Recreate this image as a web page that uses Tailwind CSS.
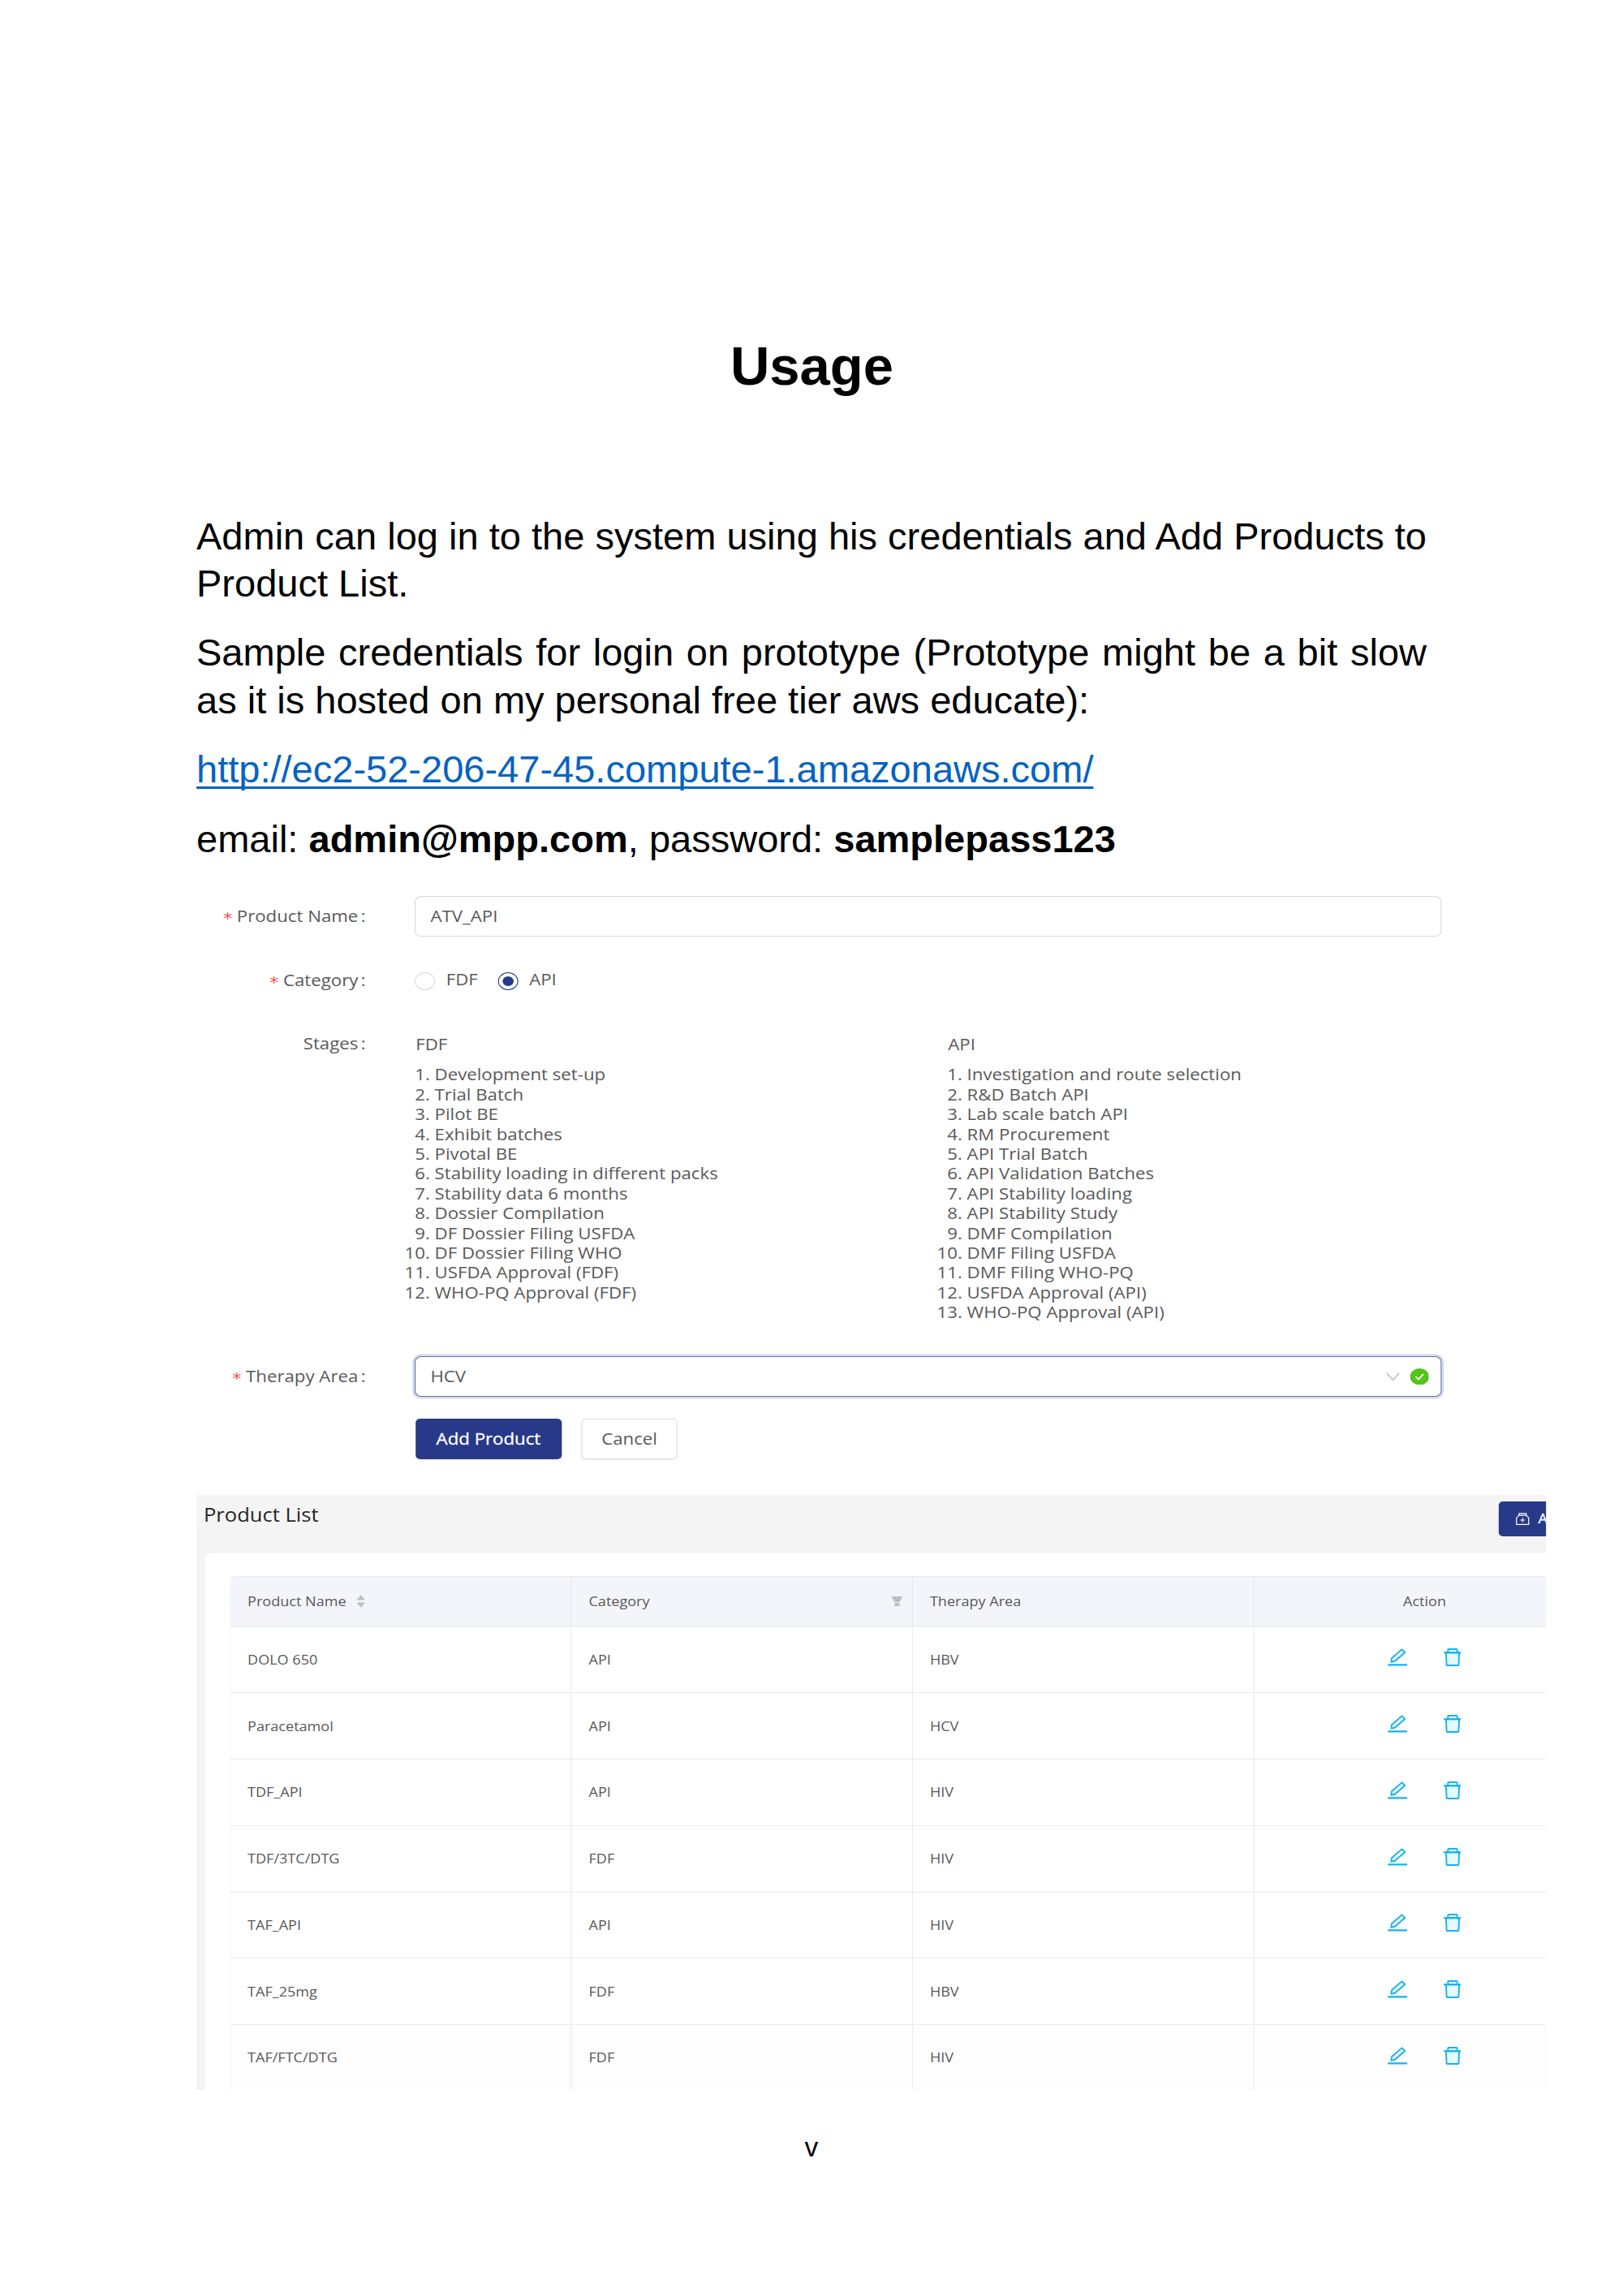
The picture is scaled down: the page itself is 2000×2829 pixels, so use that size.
<!DOCTYPE html>
<html lang="en">
<head>
<meta charset="utf-8">
<title>Usage</title>
<script src="https://cdn.jsdelivr.net/npm/@tailwindcss/browser@4"></script>
</head>
<body class="bg-white">
<main class="w-[2000px] h-[2829px] overflow-hidden bg-white pl-[242px] pt-[413px] font-['Liberation_Sans',Arial,sans-serif] text-black">
  <h1 class="w-[1517px] h-[218.500px] text-center text-[67px] leading-[76px] font-bold">Usage</h1>
  <div class="w-[1516px] h-[472.500px] flex flex-col gap-[26.4px] text-[47.02px] leading-[58.8px]">
    <p class="text-justify">Admin can log in to the system using his credentials and Add Products to Product List.</p>
    <p class="text-justify">Sample credentials for login on prototype (Prototype might be a bit slow as it is hosted on my personal free tier aws educate):</p>
    <p><a class="text-[#0563c1] underline decoration-[3px] underline-offset-[5px] [text-decoration-skip-ink:none]">http://ec2-52-206-47-45.compute-1.amazonaws.com/</a></p>
    <p>email: <b>admin@mpp.com</b>, password: <b>samplepass123</b></p>
  </div>

  <!-- Product form -->
  <form class="w-[1459px] h-[738px] origin-top-left scale-x-[1.14] font-['Open_Sans',sans-serif] text-[19.5px] leading-[24.4px] text-[#595959]">
    <div class="flex items-center h-[49.5px]">
      <label class="w-[183px] pt-[1px] text-right whitespace-nowrap"><span class="inline-block translate-y-[2px] font-['DejaVu_Sans',sans-serif] leading-none text-[#ff4d4f] mr-[5px]">*</span>Product Name<span class="ml-[3px]">:</span></label>
      <div class="ml-[53px] w-[1110px] h-full border-[1.5px] border-[#d9d9d9] rounded-[7px] px-[16px] pt-[1px] flex items-center">ATV_API</div>
    </div>
    <div class="flex items-center mt-[43px] h-[24px]">
      <label class="w-[183px] text-right whitespace-nowrap"><span class="inline-block translate-y-[2px] font-['DejaVu_Sans',sans-serif] leading-none text-[#ff4d4f] mr-[5px]">*</span>Category<span class="ml-[3px]">:</span></label>
      <span class="ml-[53px] w-[22.4px] h-[22.4px] mt-[1px] rounded-full border-[1.5px] border-[#d9d9d9]"></span>
      <span class="ml-[11.5px] w-[56px] -mt-[3px]">FDF</span>
      <span class="w-[22.4px] h-[22.4px] mt-[1px] rounded-full border-[1.5px] border-[#28398a] flex items-center justify-center"><span class="size-[11.5px] rounded-full bg-[#28398a]"></span></span>
      <span class="ml-[11.500px] -mt-[3px]">API</span>
    </div>
    <div class="flex mt-[53.5px] h-[397px]">
      <div class="w-[183px] text-right">Stages<span class="ml-[3px]">:</span></div>
      <div class="ml-[53px] w-[575.500px]">
        <div class="pl-[1px] mt-[0.5px]">FDF</div>
        <ol class="mt-[13.5px] list-decimal pl-[21.500px]">
          <li>Development set-up</li><li>Trial Batch</li><li>Pilot BE</li><li>Exhibit batches</li><li>Pivotal BE</li><li>Stability loading in different packs</li><li>Stability data 6 months</li><li>Dossier Compilation</li><li>DF Dossier Filing USFDA</li><li>DF Dossier Filing WHO</li><li>USFDA Approval (FDF)</li><li>WHO-PQ Approval (FDF)</li>
        </ol>
      </div>
      <div>
        <div class="pl-[1px] mt-[0.5px]">API</div>
        <ol class="mt-[13.5px] list-decimal pl-[21.500px]">
          <li>Investigation and route selection</li><li>R&amp;D Batch API</li><li>Lab scale batch API</li><li>RM Procurement</li><li>API Trial Batch</li><li>API Validation Batches</li><li>API Stability loading</li><li>API Stability Study</li><li>DMF Compilation</li><li>DMF Filing USFDA</li><li>DMF Filing WHO-PQ</li><li>USFDA Approval (API)</li><li>WHO-PQ Approval (API)</li>
        </ol>
      </div>
    </div>
    <div class="flex items-center h-[50px]">
      <label class="w-[183px] text-right whitespace-nowrap"><span class="inline-block translate-y-[2px] font-['DejaVu_Sans',sans-serif] leading-none text-[#ff4d4f] mr-[5px]">*</span>Therapy Area<span class="ml-[3px]">:</span></label>
      <div class="ml-[53px] w-[1110px] h-full border-[1.5px] border-[#6473b0] ring-[2.5px] ring-[#d8daea] rounded-[7px] pl-[16px] pr-[13px] flex items-center">HCV
        <svg class="ml-auto" width="15" height="11" viewBox="0 0 15 11" fill="none" stroke="#c4c4c4" stroke-width="1.6"><path d="M.8 .8L7.500 9.500L14.200 .8"/></svg>
        <svg class="ml-[10.500px]" width="20.500" height="20.500" viewBox="0 0 20 20"><circle cx="10" cy="10" r="10" fill="#52c41a"/><path d="M5.800 10L8.900 13.100L14 6.800" fill="none" stroke="#fff" stroke-width="1.700"/></svg>
      </div>
    </div>
    <div class="flex mt-[27px] ml-[237px] gap-[21.5px] h-[50px]">
      <button type="button" class="w-[157.500px] bg-[#28398a] text-white rounded-[5px] shadow-[0_2px_1px_#0000000b] [-webkit-text-stroke:0.3px_#fff]">Add Product</button>
      <button type="button" class="w-[104px] bg-white border-[1.5px] border-[#dedede] rounded-[5px] shadow-[0_2px_1px_#0000000b]">Cancel</button>
    </div>
  </form>

  <!-- Product list -->
  <section class="w-[1569px] h-[732.500px] overflow-hidden origin-top-left scale-x-[1.06] bg-[#f4f4f4] font-['Open_Sans',sans-serif] text-[17.050px] leading-[24px] text-[#595959]">
    <div class="flex justify-between h-[70px]">
      <h2 class="pl-[8.500px] pt-[7px] text-[24.100px] leading-[33px] text-[#262626]">Product List</h2>
      <button type="button" class="mt-[8px] -mr-[120px] w-[175.500px] h-[42.500px] rounded-[5px] bg-[#28398a] text-white flex items-center pl-[20.500px] gap-[10.500px] shrink-0 whitespace-nowrap [-webkit-text-stroke:0.3px_#fff]">
        <svg width="15.500" height="15" viewBox="0 0 16 15" preserveAspectRatio="none" fill="none" stroke="#fff" stroke-width="1.200"><path d="M3.600 3.600V.8H12.400V3.600M3.600 3.200H12.400L15.300 6.200V14.300H.7V6.200L3.600 3.200M8 6.400V11.600M5.300 9H10.700"/></svg>
        <span>Add Product</span>
      </button>
    </div>
    <div class="ml-[9.400px] w-[1700px] h-[720px] bg-white border-t-[1.5px] border-l-[1.5px] border-[#ebebeb] rounded-tl-[8px] pl-[28.300px] pt-[28.500px]">
      <div class="w-[1587.500px] border-t-[1.5px] border-l-[1.5px] border-[#e9e9e9] rounded-tl-[6px] overflow-hidden">
        <div class="grid grid-cols-4 h-[62px] bg-[#f3f5fa] border-b-[2px] border-[#efefef]">
          <div class="flex items-center px-[19.800px] pt-[1px] border-r border-[#e6e7eb]">Product Name
            <svg class="ml-[11.500px]" width="10.500" height="16" viewBox="0 0 11 16" fill="#bfbfbf"><path d="M5.500 0L11 6.500H0zM5.500 16L11 9.500H0z"/></svg>
          </div>
          <div class="flex items-center pl-[19.800px] pr-[10.500px] pt-[1px] border-r border-[#e6e7eb]">Category
            <svg class="ml-auto" width="13" height="12" viewBox="0 0 14 12" preserveAspectRatio="none" fill="#bfbfbf"><path d="M0 0H14L10.200 7H3.800zM3.800 8H10.200V12H3.800z"/></svg>
          </div>
          <div class="flex items-center px-[19.800px] pt-[1px] border-r border-[#e6e7eb]">Therapy Area</div>
          <div class="flex items-center justify-center pt-[1px]">Action</div>
        </div>
        <div id="rows"></div>
      </div>
    </div>
  </section>
  <footer class="w-[1516px] mt-[52px] text-center text-[33.600px] leading-[38px]">v</footer>
</main>

<template id="row">
  <div class="grid grid-cols-4 h-[81.750px] border-b-[1.5px] border-[#ebebeb]">
    <div class="flex items-center px-[19.800px] border-r border-[#e9e9e9]"></div>
    <div class="flex items-center px-[19.800px] border-r border-[#e9e9e9]"></div>
    <div class="flex items-center px-[19.800px] border-r border-[#e9e9e9]"></div>
    <div class="flex items-center justify-center gap-[41.500px] pb-[5px]">
      <svg width="22.600" height="22" viewBox="0 0 24 22" preserveAspectRatio="none" fill="none" stroke="#13b2f0" stroke-width="1.900"><path d="M.8 20.400H23.200" stroke-width="2.100" stroke-linecap="round"/><path d="M17.400 1.400L21.200 5L8.800 15.800L4.300 16.700L4.900 12.300z" fill="#f2fcff" stroke-linejoin="round"/></svg>
      <svg width="20.800" height="22" viewBox="0 0 22 22" preserveAspectRatio="none" fill="none" stroke="#13b2f0" stroke-width="1.900"><path d="M2.900 5.200L3.600 20.200Q3.600 21 4.400 21H17.600Q18.400 21 18.400 20.200L19.100 5.200z" fill="#e6faff"/><path d="M.6 5.200H21.400" stroke-linecap="round"/><path d="M5.300 5V2Q5.300 1 6.300 1H15.700Q16.700 1 16.700 2V5"/></svg>
    </div>
  </div>
</template>
<script>
const products = [["DOLO 650","API","HBV"],["Paracetamol","API","HCV"],["TDF_API","API","HIV"],["TDF/3TC/DTG","FDF","HIV"],["TAF_API","API","HIV"],["TAF_25mg","FDF","HBV"],["TAF/FTC/DTG","FDF","HIV"]];
const rows = document.getElementById("rows");
for (const product of products) {
  const row = document.getElementById("row").content.cloneNode(true);
  product.forEach((value, i) => { row.firstElementChild.children[i].textContent = value; });
  rows.append(row);
}
rows.lastElementChild.classList.add("bg-[#fdfdfd]");
</script>
</body>
</html>
